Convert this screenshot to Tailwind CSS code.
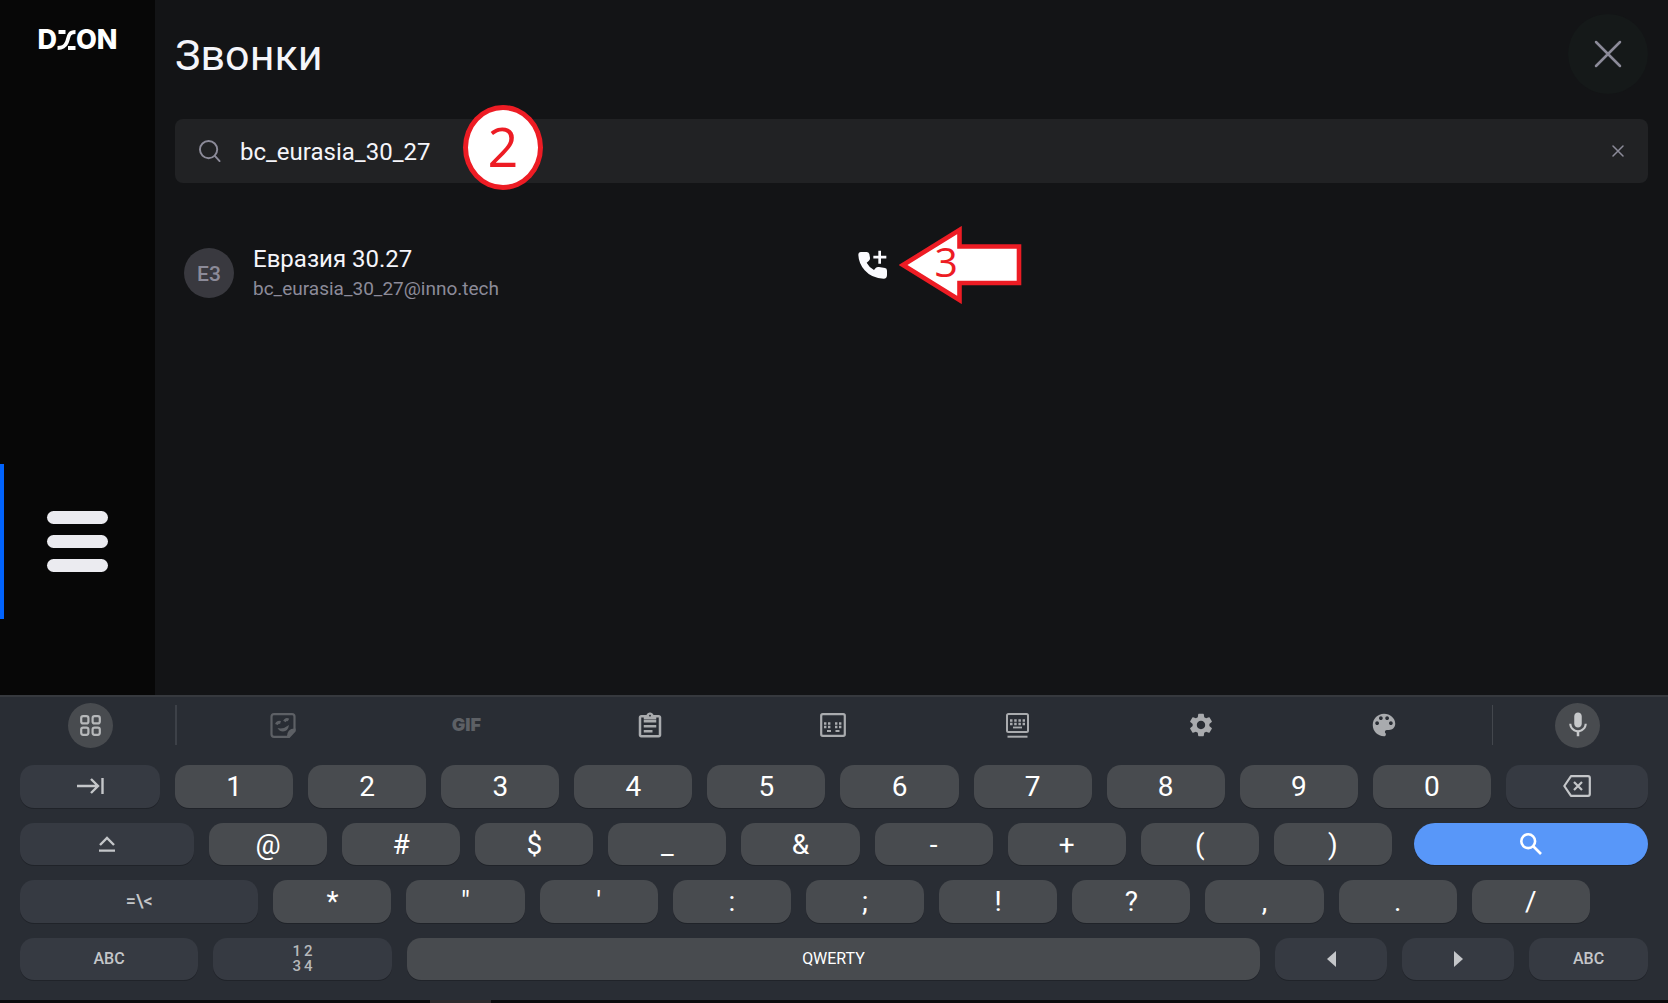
<!DOCTYPE html>
<html lang="ru">
<head>
<meta charset="utf-8">
<meta name="viewport" content="width=device-width, initial-scale=1">
<title>DION — Звонки</title>
<script src="https://cdn.jsdelivr.net/npm/@tailwindcss/browser@4"></script>
</head>
<body class="flex min-h-screen flex-col bg-[#131416] font-['Roboto',sans-serif] text-[#f5f5fa]">

<div class="flex flex-1">
  <!-- Sidebar -->
  <aside class="flex w-[155px] shrink-0 flex-col justify-between bg-[#070707] pb-[76px]">
    <a href="#" aria-label="DION" class="flex h-20 items-center justify-center font-['Inter',sans-serif] text-[27px] leading-8 font-extrabold text-white">
      <span>D</span>
      <svg class="h-5 w-[19px]" viewBox="0 0 19 20" fill="none" stroke="currentColor" stroke-width="3.800"><path d="M1.500 2h7M18.500 2C10 2 12 9 9.500 13C8 16.500 5 18 0.500 18M11 18h7.500"/></svg>
      <span>ON</span>
    </a>
    <button aria-label="Меню" class="flex h-[155px] flex-col items-center justify-center gap-[11px] border-l-4 border-[#0163fd] pr-1">
      <span class="h-[13px] w-[61px] rounded-full bg-[#ebebf0]"></span>
      <span class="h-[13px] w-[61px] rounded-full bg-[#ebebf0]"></span>
      <span class="h-[13px] w-[61px] rounded-full bg-[#ebebf0]"></span>
    </button>
  </aside>

  <!-- Calls -->
  <main class="flex-1 px-5 pt-[14px]">
    <header class="flex h-20 items-center justify-between">
      <h1 class="pt-0.5 text-[43px] leading-[52px]">Звонки</h1>
      <button aria-label="Закрыть" class="flex size-20 items-center justify-center rounded-full bg-[#151919] text-[#8c8b99]">
        <svg class="size-7" viewBox="0 0 28 28" fill="none" stroke="currentColor" stroke-width="2.500" stroke-linecap="round"><path d="M2 2l24 24M26 2L2 26"/></svg>
      </button>
    </header>

    <div class="relative mt-[25px] flex h-16 items-center rounded-lg bg-[#212224] pr-6 pl-6">
      <svg class="size-[23px] shrink-0 text-[#8c8b99]" viewBox="0 0 24 24" fill="none" stroke="currentColor" stroke-width="2" stroke-linecap="round"><circle cx="10" cy="10" r="9"/><path d="M16.500 16.500l5 5.500"/></svg>
      <input type="text" aria-label="Поиск" value="bc_eurasia_30_27" class="ml-[18px] min-w-0 flex-1 bg-transparent pt-0.5 text-2xl outline-none">
      <button aria-label="Очистить" class="text-[#8c8b99]">
        <svg class="size-3" viewBox="0 0 12 12" fill="none" stroke="currentColor" stroke-width="1.500" stroke-linecap="round"><path d="M1 1l10 10M11 1L1 11"/></svg>
      </button>
      <div class="absolute -top-[14px] left-[288px] flex h-[85px] w-20 items-center justify-center rounded-[50%] border-[5px] border-[#ed1c24] bg-white pb-1 font-['Open_Sans',sans-serif] text-[54px] leading-[60px] text-[#ed1c24]">2</div>
    </div>

    <ul class="mt-[60px] grid grid-cols-2">
      <li class="relative flex items-center pr-[25px] pl-[9px]">
        <span class="flex size-[50px] shrink-0 items-center justify-center rounded-full bg-[#39393f] pt-0.5 text-[21px] leading-6 font-medium text-[#8c8b99]">Е3</span>
        <div class="ml-[19px] flex-1">
          <p class="text-2xl">Евразия 30.27</p>
          <p class="text-[19px] leading-7 text-[#8c8b99]">bc_eurasia_30_27@inno.tech</p>
        </div>
        <button aria-label="Позвонить" class="mt-[7px] self-start text-[#fafafe]">
          <svg class="size-[29px]" viewBox="0 0 87 87"><path fill="currentColor" d="M9 6h17q6 0 8 6l2 11q1 6-4 10l-6 5q8 15 22 22l5-6q4-4 10-3l18 3q6 1 6 8v13q0 11-10 11Q42 86 20 61Q2 40 1 15Q1 6 9 6z"/><path d="M65 2v39M46 21.500h39" stroke="currentColor" stroke-width="8"/></svg>
        </button>
        <div class="absolute -top-[17px] left-[calc(100%-13px)] h-[78px] w-[123px]">
          <svg class="size-full" viewBox="0 0 123 78"><path d="M4 39L60.500 4V20.500H120V57H60.500V74Z" fill="#fff" stroke="#ed1c24" stroke-width="4.600"/></svg>
          <span class="absolute top-3 left-9 font-['Open_Sans',sans-serif] text-[41px] leading-[46px] text-[#ed1c24]">3</span>
        </div>
      </li>
    </ul>
  </main>
</div>

<!-- On-screen keyboard -->
<section aria-label="Клавиатура" class="border-t-2 border-[#36393e] bg-[#292d34] px-5 pb-[19px] text-[28px] leading-8 text-white">
  <div class="flex h-14 items-center text-[#a9abae]">
    <button aria-label="Приложения" class="ml-12 flex size-[45px] shrink-0 items-center justify-center rounded-full bg-[#484b4f] text-[#b6b8ba]">
      <svg class="size-[21px]" viewBox="0 0 21 21" fill="none" stroke="currentColor" stroke-width="2.200"><rect x="1.200" y="1.200" width="7.200" height="7.200" rx="2"/><rect x="12.600" y="1.200" width="7.200" height="7.200" rx="2"/><rect x="1.200" y="12.600" width="7.200" height="7.200" rx="2"/><rect x="12.600" y="12.600" width="7.200" height="7.200" rx="2"/></svg>
    </button>
    <span class="ml-[62px] h-10 w-0.5 bg-[#3d4148]"></span>
    <div class="mr-4 ml-[14px] grid flex-1 grid-cols-7">
      <button aria-label="Стикеры" class="flex h-10 items-center justify-center text-[#5d6065]">
        <svg class="h-[25px] w-[26px]" viewBox="0 0 26 25" fill="none" stroke="currentColor" stroke-width="2.200"><path d="M4 1.200h18q2.500 0 2.500 2.500V17l-7 6.800H4q-2.500 0-2.500-2.500V3.700Q1.500 1.200 4 1.200z"/><path d="M24.500 16.500q-6.500 0-6.500 7.500h1l5.500-6z" fill="currentColor"/><path d="M7.500 15q6 1.500 11.500-3-1 6.500-6 6.500-3.500 0-5.500-3.500z" fill="currentColor" stroke="none"/><path d="M6.500 11.500q1-3 4-2M14.500 8.500q1.500-3 4-1.500" stroke-width="3"/></svg>
      </button>
      <button class="flex h-10 items-center justify-center font-['Inter',sans-serif] text-lg font-black text-[#5d6065]">GIF</button>
      <button aria-label="Буфер обмена" class="flex h-10 items-center justify-center">
        <svg class="size-[30px]" viewBox="0 0 24 24" fill="currentColor"><path d="M7 15h7v2H7zm0-4h10v2H7zm0-4h10v2H7zm12-4h-4.180C14.400 1.840 13.300 1 12 1c-1.300 0-2.400.84-2.820 2H5c-1.100 0-2 .9-2 2v14c0 1.100.9 2 2 2h14c1.100 0 2-.9 2-2V5c0-1.100-.9-2-2-2zm-7-.250c.410 0 .75.340.75.750s-.340.750-.750.750-.750-.340-.750-.750.340-.750.750-.750zM19 19H5V5h2v1.500h10V5h2v14z" transform="translate(0 1)"/></svg>
      </button>
      <button aria-label="Раздельная клавиатура" class="flex h-10 items-center justify-center">
        <svg class="h-[24px] w-[26px]" viewBox="0 0 26 24" fill="none" stroke="currentColor"><rect x="1.200" y="1.200" width="23.600" height="21.600" rx="1.500" stroke-width="2.200"/><path d="M4 10.500h7M15 10.500h7M4 14h7M15 14h7" stroke-width="2.400" stroke-dasharray="2.400 1.600"/><path d="M7 18h4M15.500 18h4" stroke-width="1.800"/></svg>
      </button>
      <button aria-label="Плавающая клавиатура" class="flex h-10 items-center justify-center">
        <svg class="h-[25px] w-[23px]" viewBox="0 0 23 25" fill="none" stroke="currentColor"><rect x="1" y="1" width="21" height="18" rx="1.500" stroke-width="2"/><path d="M4 7.500h15M4 11h15" stroke-width="2.400" stroke-dasharray="2.500 1.700"/><path d="M7 14.500h9" stroke-width="1.800"/><path d="M1.500 23.700h20" stroke-width="2"/></svg>
      </button>
      <button aria-label="Настройки" class="flex h-10 items-center justify-center">
        <svg class="size-7" viewBox="0 0 24 24" fill="currentColor"><path d="M19.140 12.940c.04-.3.06-.61.06-.94 0-.32-.02-.64-.07-.94l2.030-1.580c.18-.14.23-.41.12-.61l-1.920-3.320c-.12-.22-.37-.29-.59-.22l-2.390.96c-.5-.38-1.030-.7-1.620-.94l-.36-2.540c-.04-.24-.24-.41-.48-.41h-3.840c-.24 0-.43.17-.47.41l-.36 2.540c-.59.24-1.130.57-1.620.94l-2.390-.96c-.22-.08-.47 0-.59.22L2.740 8.870c-.12.21-.08.47.12.61l2.030 1.580c-.05.3-.09.63-.09.94s.02.64.07.94l-2.030 1.580c-.18.14-.23.41-.12.61l1.920 3.320c.12.22.37.29.59.22l2.390-.96c.5.38 1.030.7 1.620.94l.36 2.540c.05.24.24.41.48.41h3.840c.24 0 .44-.17.47-.41l.36-2.540c.59-.24 1.130-.56 1.620-.94l2.390.96c.22.08.47 0 .59-.22l1.920-3.320c.12-.22.07-.47-.12-.61l-2.010-1.580zM12 15.600c-1.980 0-3.600-1.620-3.600-3.600s1.620-3.600 3.600-3.600 3.600 1.620 3.600 3.600-1.620 3.600-3.600 3.600z"/></svg>
      </button>
      <button aria-label="Темы" class="flex h-10 items-center justify-center">
        <svg class="size-[30px]" viewBox="0 0 24 24" fill="currentColor"><path d="M12 3c-4.970 0-9 4.030-9 9s4.030 9 9 9c.83 0 1.500-.67 1.500-1.500 0-.39-.15-.74-.39-1.010-.23-.26-.38-.61-.38-.99 0-.83.67-1.500 1.500-1.500H16c2.760 0 5-2.240 5-5 0-4.420-4.030-8-9-8zm-5.500 9c-.83 0-1.500-.67-1.500-1.500S5.670 9 6.500 9 8 9.670 8 10.500 7.330 12 6.500 12zm3-4C8.670 8 8 7.330 8 6.500S8.670 5 9.500 5s1.500.67 1.500 1.500S10.330 8 9.500 8zm5 0c-.83 0-1.500-.67-1.500-1.500S13.670 5 14.500 5s1.500.67 1.500 1.500S15.330 8 14.500 8zm3 4c-.83 0-1.500-.67-1.500-1.500S16.670 9 17.500 9s1.500.67 1.500 1.500-.67 1.500-1.500 1.500z"/></svg>
      </button>
    </div>
    <span class="h-10 w-px bg-[#43474d]"></span>
    <button aria-label="Голосовой ввод" class="mr-12 ml-[62px] flex size-[45px] shrink-0 items-center justify-center rounded-full bg-[#484b4f] text-[#c6c8ca]">
      <svg class="size-[30px]" viewBox="0 0 24 24" fill="currentColor"><path d="M12 14c1.660 0 2.990-1.340 2.990-3L15 5c0-1.660-1.340-3-3-3S9 3.340 9 5v6c0 1.660 1.340 3 3 3zm5.300-3c0 3-2.540 5.100-5.300 5.100S6.700 14 6.700 11H5c0 3.410 2.720 6.230 6 6.720V21h2v-3.280c3.280-.48 6-3.300 6-6.720h-1.700z"/></svg>
    </button>
  </div>

  <div class="mt-3 mb-px grid h-[215px] grid-rows-4 gap-[15px]">
    <div class="flex gap-[15px]">
      <button aria-label="Tab" class="flex flex-[140] items-center justify-center rounded-[14px] bg-[#363a42] text-[#c4c6c9] shadow-[0_1px_0_#202329]"><svg class="h-4 w-[27px]" viewBox="0 0 27 16" fill="none" stroke="currentColor" stroke-width="2.400"><path d="M0 8h21M14 1l7 7-7 7M25.500 0v16"/></svg></button>
      <button class="flex-[118] rounded-[14px] bg-[#484b4f] pt-0.5 shadow-[0_1px_0_#202329]">1</button>
      <button class="flex-[118] rounded-[14px] bg-[#484b4f] pt-0.5 shadow-[0_1px_0_#202329]">2</button>
      <button class="flex-[118] rounded-[14px] bg-[#484b4f] pt-0.5 shadow-[0_1px_0_#202329]">3</button>
      <button class="flex-[118] rounded-[14px] bg-[#484b4f] pt-0.5 shadow-[0_1px_0_#202329]">4</button>
      <button class="flex-[118] rounded-[14px] bg-[#484b4f] pt-0.5 shadow-[0_1px_0_#202329]">5</button>
      <button class="flex-[118] rounded-[14px] bg-[#484b4f] pt-0.5 shadow-[0_1px_0_#202329]">6</button>
      <button class="flex-[118] rounded-[14px] bg-[#484b4f] pt-0.5 shadow-[0_1px_0_#202329]">7</button>
      <button class="flex-[118] rounded-[14px] bg-[#484b4f] pt-0.5 shadow-[0_1px_0_#202329]">8</button>
      <button class="flex-[118] rounded-[14px] bg-[#484b4f] pt-0.5 shadow-[0_1px_0_#202329]">9</button>
      <button class="flex-[118] rounded-[14px] bg-[#484b4f] pt-0.5 shadow-[0_1px_0_#202329]">0</button>
      <button aria-label="Backspace" class="flex flex-[142] items-center justify-center rounded-[14px] bg-[#363a42] text-[#c4c6c9] shadow-[0_1px_0_#202329]"><svg class="h-[22px] w-7" viewBox="0 0 28 22" fill="none" stroke="currentColor" stroke-width="2.200" stroke-linejoin="round"><path d="M8 1.200h17q1.800 0 1.800 1.800v16q0 1.800-1.800 1.800H8L1.300 11z"/><path d="M11 7l8 8M19 7l-8 8"/></svg></button>
    </div>
    <div class="flex gap-[15px]">
      <button aria-label="Shift" class="flex flex-[174] items-center justify-center rounded-[14px] bg-[#363a42] text-[#c4c6c9] shadow-[0_1px_0_#202329]"><svg class="size-4" viewBox="0 0 16 16" fill="none" stroke="currentColor" stroke-width="2.400"><path d="M1 9l7-7 7 7M0 14.600h16"/></svg></button>
      <button class="flex-[118] rounded-[14px] bg-[#484b4f] pt-0.5 shadow-[0_1px_0_#202329]">@</button>
      <button class="flex-[118] rounded-[14px] bg-[#484b4f] pt-0.5 shadow-[0_1px_0_#202329]">#</button>
      <button class="flex-[118] rounded-[14px] bg-[#484b4f] pt-0.5 shadow-[0_1px_0_#202329]">$</button>
      <button class="flex-[118] rounded-[14px] bg-[#484b4f] pt-0.5 shadow-[0_1px_0_#202329]">_</button>
      <button class="flex-[118] rounded-[14px] bg-[#484b4f] pt-0.5 shadow-[0_1px_0_#202329]">&amp;</button>
      <button class="flex-[118] rounded-[14px] bg-[#484b4f] pt-0.5 shadow-[0_1px_0_#202329]">-</button>
      <button class="flex-[118] rounded-[14px] bg-[#484b4f] pt-0.5 shadow-[0_1px_0_#202329]">+</button>
      <button class="flex-[118] rounded-[14px] bg-[#484b4f] pt-0.5 shadow-[0_1px_0_#202329]">(</button>
      <button class="flex-[118] rounded-[14px] bg-[#484b4f] pt-0.5 shadow-[0_1px_0_#202329]">)</button>
      <button aria-label="Найти" class="ml-[7px] flex flex-[234] items-center justify-center rounded-full bg-[#5897f9] shadow-[0_1px_0_#202329]"><svg class="size-[22px]" viewBox="0 0 22 22" fill="none" stroke="currentColor" stroke-width="2.600"><circle cx="8.200" cy="8.200" r="6.900"/><path d="M13 13l8 8"/></svg></button>
    </div>
    <div class="flex gap-[15px]">
      <button class="flex-[238] rounded-[14px] bg-[#363a42] text-lg font-medium text-[#c4c6c9] shadow-[0_1px_0_#202329]">=\&lt;</button>
      <button class="flex-[118] rounded-[14px] bg-[#484b4f] pt-0.5 shadow-[0_1px_0_#202329]">*</button>
      <button class="flex-[118] rounded-[14px] bg-[#484b4f] pt-0.5 shadow-[0_1px_0_#202329]">"</button>
      <button class="flex-[118] rounded-[14px] bg-[#484b4f] pt-0.5 shadow-[0_1px_0_#202329]">'</button>
      <button class="flex-[118] rounded-[14px] bg-[#484b4f] pt-0.5 shadow-[0_1px_0_#202329]">:</button>
      <button class="flex-[118] rounded-[14px] bg-[#484b4f] pt-0.5 shadow-[0_1px_0_#202329]">;</button>
      <button class="flex-[118] rounded-[14px] bg-[#484b4f] pt-0.5 shadow-[0_1px_0_#202329]">!</button>
      <button class="flex-[118] rounded-[14px] bg-[#484b4f] pt-0.5 shadow-[0_1px_0_#202329]">?</button>
      <button class="flex-[118] rounded-[14px] bg-[#484b4f] pt-0.5 shadow-[0_1px_0_#202329]">,</button>
      <button class="flex-[118] rounded-[14px] bg-[#484b4f] pt-0.5 shadow-[0_1px_0_#202329]">.</button>
      <button class="flex-[118] rounded-[14px] bg-[#484b4f] pt-0.5 shadow-[0_1px_0_#202329]">/</button>
      <span class="flex-[43]"></span>
    </div>
    <div class="flex gap-[15px] text-base">
      <button class="flex-[178] rounded-[14px] bg-[#363a42] font-medium text-[#c4c6c9] shadow-[0_1px_0_#202329]">ABC</button>
      <button class="flex flex-[179] items-center justify-center rounded-[14px] bg-[#363a42] text-[15px] leading-[15px] font-medium text-[#b6b8ba] shadow-[0_1px_0_#202329]"><span class="grid grid-cols-2 gap-x-[3px]"><span>1</span><span>2</span><span>3</span><span>4</span></span></button>
      <button class="flex-[853] rounded-[14px] bg-[#484b4f] shadow-[0_1px_0_#202329]">QWERTY</button>
      <button aria-label="Влево" class="flex flex-[112] items-center justify-center rounded-[14px] bg-[#363a42] text-[#c4c6c9] shadow-[0_1px_0_#202329]"><svg class="h-4 w-[9px]" viewBox="0 0 9 16" fill="currentColor"><path d="M9 0v16L0 8z"/></svg></button>
      <button aria-label="Вправо" class="flex flex-[112] items-center justify-center rounded-[14px] bg-[#363a42] text-[#c4c6c9] shadow-[0_1px_0_#202329]"><svg class="h-4 w-[9px]" viewBox="0 0 9 16" fill="currentColor"><path d="M0 0v16l9-8z"/></svg></button>
      <button class="flex-[119] rounded-[14px] bg-[#363a42] font-medium text-[#c4c6c9] shadow-[0_1px_0_#202329]">ABC</button>
    </div>
  </div>
</section>
<div class="h-[3px] bg-[#0b0b0d] pl-[430px]"><div class="h-full w-[61px] bg-[#2e2b2e]"></div></div>
</body>
</html>
